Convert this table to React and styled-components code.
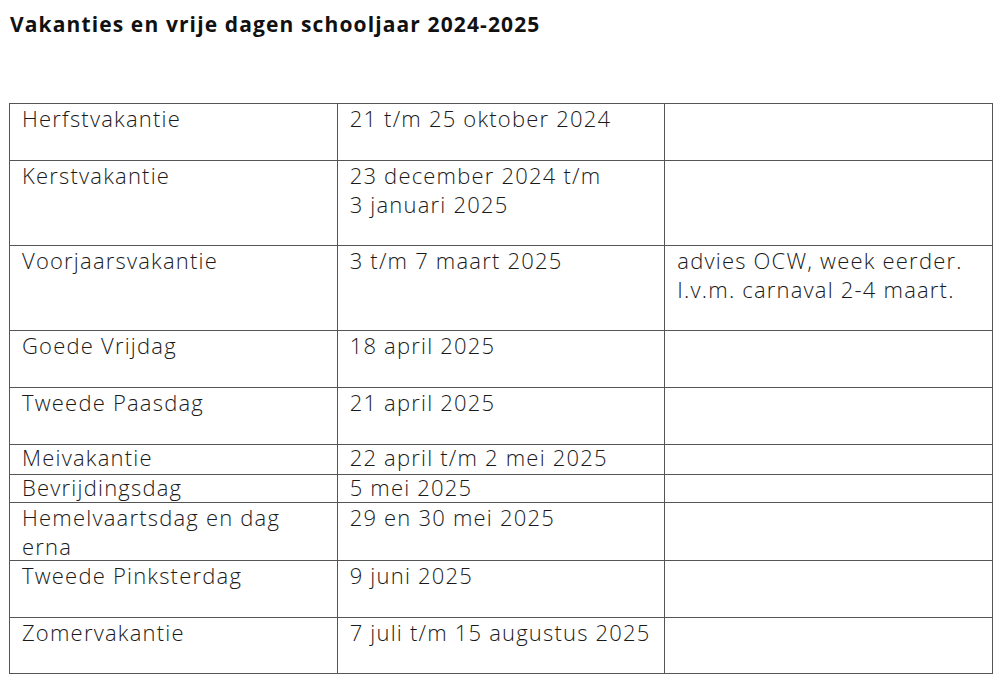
import styled, { createGlobalStyle } from 'styled-components'

const GlobalStyle = createGlobalStyle`
  html, body {
    margin: 0;
    padding: 0;
    background: #ffffff;
  }
  body {
    font-family: "Open Sans", "Liberation Sans", sans-serif;
    color: #222;
  }
`

const Page = styled.div`
  padding: 10px 12px 0 9px;
`

const Title = styled.h1`
  margin: 0 0 0 1px;
  font-family: "Open Sans", "Liberation Sans", sans-serif;
  font-weight: 700;
  font-size: 21px;
  line-height: 28px;
  letter-spacing: 1.12px;
  color: #111;
`

const Table = styled.table`
  margin-top: 65px;
  width: 984px;
  border-collapse: collapse;
  table-layout: fixed;
`

const Row = styled.tr`
  height: ${p => p.$h}px;
`

const Cell = styled.td`
  border: 1.5px solid #555;
  padding: 0 10px 0 12px;
  vertical-align: top;
  font-size: 22px;
  font-weight: 300;
  line-height: ${p => (p.$compact ? '25px' : '28.5px')};
  letter-spacing: 1.2px;
  color: #1a1a1a;
`

const rows = [
  { name: 'Herfstvakantie', date: ['21 t/m 25 oktober 2024'], note: [], h: 57 },
  { name: 'Kerstvakantie', date: ['23 december 2024 t/m', '3 januari 2025'], note: [], h: 85 },
  { name: 'Voorjaarsvakantie', date: ['3 t/m 7 maart 2025'], note: ['advies OCW, week eerder.', 'I.v.m. carnaval 2-4 maart.'], h: 85 },
  { name: 'Goede Vrijdag', date: ['18 april 2025'], note: [], h: 57 },
  { name: 'Tweede Paasdag', date: ['21 april 2025'], note: [], h: 57 },
  { name: 'Meivakantie', date: ['22 april t/m 2 mei 2025'], note: [], h: 30, compact: true },
  { name: 'Bevrijdingsdag', date: ['5 mei 2025'], note: [], h: 28, compact: true },
  { name: 'Hemelvaartsdag en dag erna', date: ['29 en 30 mei 2025'], note: [], h: 58 },
  { name: 'Tweede Pinksterdag', date: ['9 juni 2025'], note: [], h: 57 },
  { name: 'Zomervakantie', date: ['7 juli t/m 15 augustus 2025'], note: [], h: 56 },
]

const Lines = ({ items }) =>
  items.map((t, i) => (
    <span key={i}>
      {t}
      {i < items.length - 1 && <br />}
    </span>
  ))

export default function App() {
  return (
    <>
      <GlobalStyle />
      <Page>
        <Title>Vakanties en vrije dagen schooljaar 2024-2025</Title>
        <Table>
          <tbody>
            {rows.map(r => (
              <Row key={r.name} $h={r.h}>
                <Cell $compact={r.compact}>{r.name}</Cell>
                <Cell $compact={r.compact}><Lines items={r.date} /></Cell>
                <Cell $compact={r.compact}><Lines items={r.note} /></Cell>
              </Row>
            ))}
          </tbody>
        </Table>
      </Page>
    </>
  )
}
